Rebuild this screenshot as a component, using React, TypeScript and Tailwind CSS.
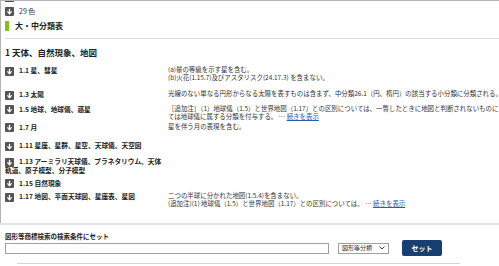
import React from "react";

const rows = [
  { label: "1.1 星、彗星", mt: "mt-[9px]", right: ["(a)暈の等級を示す星を含む。", "(b)火花(1.15.7)及びアスタリスク(24.17.3) を含まない。"] },
  { label: "1.3 太陽", mt: "mt-[8px]", right: ["光線のない単なる円形からなる太陽を表すものは含まず、中分類26.1（円、楕円）の該当する小分類に分類される。"] },
  {
    label: "1.5 地球、地球儀、惑星",
    mt: "mt-[6px]",
    right: ["［追加注］（1）地球儀（1.5）と世界地図（1.17）との区別については、一瞥したときに地図と判断されないものについ", "ては地球儀に属する分類を付与する。"],
    more: true,
  },
  { label: "1.7 月", mt: "mt-[2px]", right: ["星を伴う月の表現を含む。"] },
  { label: "1.11 星座、星群、星空、天球儀、天空図", mt: "mt-[10px]", right: [] },
  { label: "1.13 アーミラリ天球儀、プラネタリウム、天体軌道、原子模型、分子模型", mt: "mt-[7px]", right: [] },
  { label: "1.15 自然現象", mt: "mt-[5px]", right: [] },
  {
    label: "1.17 地図、平面天球図、星座表、星図",
    mt: "mt-[5px]",
    right: ["二つの半球に分かれた地図(1.5.4)を含まない。", "(追加注)(1) 地球儀（1.5）と世界地図（1.17）との区別については、"],
    more: true,
  },
];

function DownIcon() {
  return (
    <svg width="9" height="9" viewBox="0 0 9 9" className="inline-block align-middle -my-px mr-[5px]">
      <rect width="9" height="9" rx="1" fill="#555" />
      <path d="M4.5 1.8V6.2" stroke="#fff" strokeWidth="1.3" />
      <path d="M2.4 4.4L4.5 6.8L6.6 4.4" stroke="#fff" strokeWidth="1.3" fill="none" />
    </svg>
  );
}

export default function App() {
  return (
    <div className="w-[499px] h-[266px] overflow-hidden bg-white text-[#333] font-['Noto_Sans_CJK_JP',sans-serif]">
      {/* result list */}
      <div className="h-[223px] border-l border-t border-[#b4b4b4] overflow-hidden relative">
        <div className="absolute left-[4px] top-0 w-[9px] h-[1px] bg-[#555]" />
        <div className="flex items-center h-[10px] mt-[5px] px-[4px] text-[7px] leading-[8px]">
          <DownIcon />
          <span>29 色</span>
        </div>
        <div className="flex items-center h-[10px] mt-[5px] px-[4px]">
          <span className="w-[4px] h-[10px] bg-[#7dc11c]" />
          <span className="ml-[6px] text-[8px] leading-[10px] font-bold text-[#222]">大・中分類表</span>
        </div>
        <div className="ml-[4px] mt-[7px] border-t border-[#dcdcdc]" />
        <div className="mt-[8px] px-[4px] text-[8.5px] leading-[10px] font-bold text-[#222]">1 天体、自然現象、地図</div>

        {rows.map((r) => (
          <div key={r.label} className={`flex ${r.mt} pl-[4px] leading-[8px]`}>
            <div className="w-[157px] shrink-0 font-bold text-[#222] text-[6.7px]">
              <DownIcon />
              {r.label}
            </div>
            <div className="ml-[6px] whitespace-nowrap text-[6.45px]">
              {r.right.map((line, i) => (
                <div key={i} className="h-[8px]">
                  {line}
                  {r.more && i === r.right.length - 1 && (
                    <span>
                      {" "}… <span className="text-[#2a5db0] underline">続きを表示</span>
                    </span>
                  )}
                </div>
              ))}
            </div>
          </div>
        ))}
      </div>

      {/* set search condition */}
      <div className="border-t-2 border-[#e4e4e4] px-[5px] pt-[7px]">
        <div className="text-[6.5px] leading-[8px] font-bold text-[#222]">図形等商標検索の検索条件にセット</div>
        <div className="flex items-center h-[16px]">
          <div className="w-[324px] h-[11px] border border-[#a0a0a0] bg-white" />
          <div className="ml-[9px] w-[51px] h-[11px] border border-[#a0a0a0] flex items-center justify-between px-[3px] text-[6px] leading-[8px]">
            <span>図形等分類</span>
            <svg width="6" height="4" viewBox="0 0 6 4">
              <path d="M0.5 0.5L3 3L5.5 0.5" stroke="#333" fill="none" strokeWidth="0.9" />
            </svg>
          </div>
          <button className="ml-[13px] w-[40px] h-[16px] rounded-[2px] bg-[#173f72] text-white text-[7px] font-bold leading-[16px]">
            セット
          </button>
        </div>
        <div className="mt-[7px] ml-[12px] w-[443px] border-t border-[#d4d4d4]" />
      </div>
    </div>
  );
}
